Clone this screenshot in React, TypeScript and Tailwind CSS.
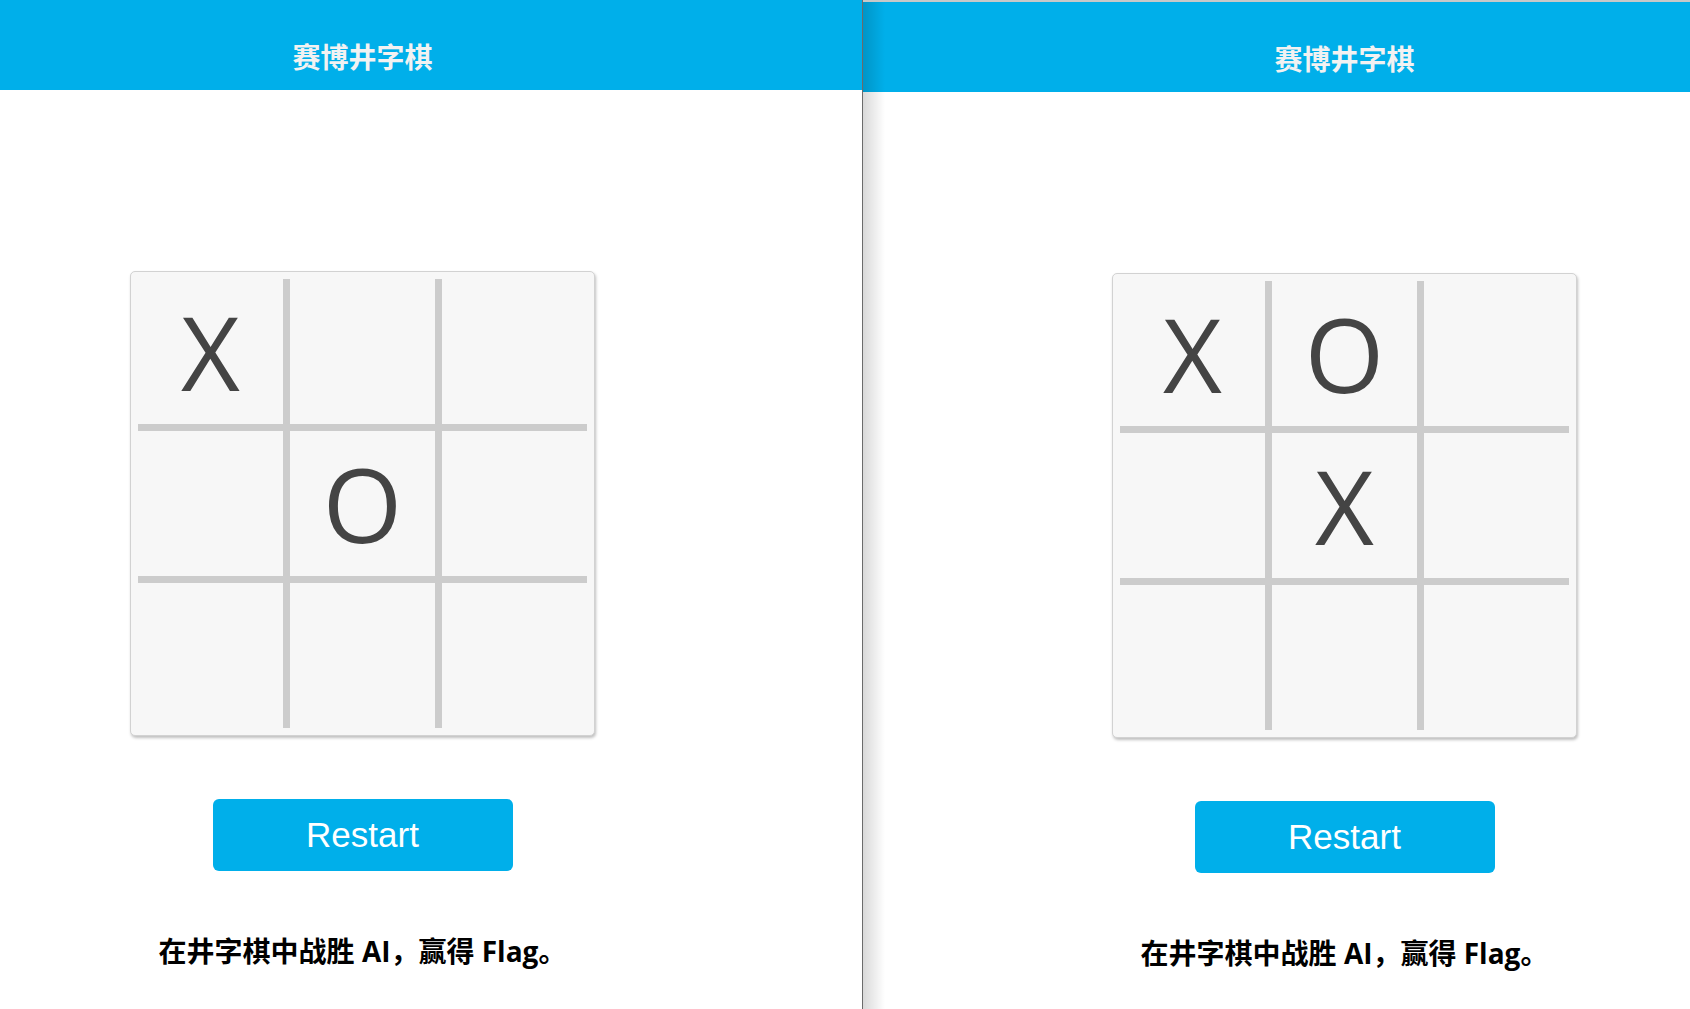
import React from "react";

type Mark = "X" | "O" | "";

const LEFT_BOARD: Mark[] = ["X", "", "", "", "O", "", "", "", ""];
const RIGHT_BOARD: Mark[] = ["X", "O", "", "", "X", "", "", "", ""];

const cjk = { fontFamily: '"Noto Sans CJK SC", "Noto Sans", sans-serif' };
const mixed = { fontFamily: '"Open Sans", "Noto Sans CJK SC", sans-serif' };

function Board({ cells }: { cells: Mark[] }) {
  return (
    <div className="rounded-[5px] border border-[#d2d2d2] bg-[#f7f7f7] p-[7px] shadow-[1px_2px_3px_rgba(0,0,0,0.25)]">
      <div className="grid grid-cols-[145px_145px_145px] grid-rows-[145px_145px_145px] gap-[7px] bg-[#cccccc]">
        {cells.map((c, i) => (
          <div
            key={i}
            className="flex items-center justify-center bg-[#f7f7f7] text-[102px] leading-none text-[#444444]"
            style={{ fontFamily: '"Open Sans", "Noto Sans", sans-serif' }}
          >
            {c}
          </div>
        ))}
      </div>
    </div>
  );
}

function GamePage({ cells, offset }: { cells: Mark[]; offset: "left" | "right" }) {
  const pad = offset === "left" ? "pl-0" : "pl-[119px]";
  return (
    <div className="flex flex-col">
      <header className={`h-[90px] bg-[#00afea] ${pad}`}>
        <div className="w-[725px] pt-[42px] text-center">
          <h1 className="text-[28px] font-bold leading-[28px] text-[#f2f2f2]" style={cjk}>
            赛博井字棋
          </h1>
        </div>
      </header>
      <main className={pad}>
        <div className="flex w-[725px] flex-col items-center">
          <div className="mt-[181px]">
            <Board cells={cells} />
          </div>
          <button
            className="mt-[63px] h-[72px] w-[300px] rounded-[6px] bg-[#00afea] text-[35px] text-white"
            style={{ fontFamily: '"Liberation Sans", Arial, sans-serif' }}
          >
            Restart
          </button>
          <p className="mt-[66px] text-[28px] font-bold leading-[28px] text-black" style={mixed}>
            在井字棋中战胜 AI，赢得 Flag。
          </p>
        </div>
      </main>
    </div>
  );
}

export default function App() {
  return (
    <div className="flex h-[1009px] w-full overflow-hidden bg-white">
      <div className="w-[863px] shrink-0 border-r border-[#6b6b6b] bg-white">
        <GamePage cells={LEFT_BOARD} offset="left" />
      </div>
      <div className="relative flex-1 border-t-2 border-[#c8c8c8] bg-white">
        <GamePage cells={RIGHT_BOARD} offset="right" />
        <div className="pointer-events-none absolute inset-y-0 left-0 w-[22px] bg-gradient-to-r from-black/15 to-transparent" />
      </div>
    </div>
  );
}
